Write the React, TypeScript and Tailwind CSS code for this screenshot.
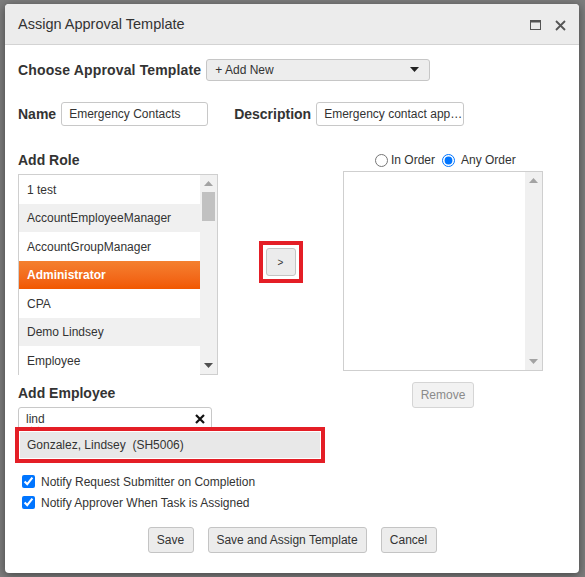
import { Fragment } from 'react';

const roles = [
  { name: '1 test', tone: 'white' },
  { name: 'AccountEmployeeManager', tone: 'gray' },
  { name: 'AccountGroupManager', tone: 'white' },
  { name: 'Administrator', tone: 'active' },
  { name: 'CPA', tone: 'white' },
  { name: 'Demo Lindsey', tone: 'gray' },
  { name: 'Employee', tone: 'white' },
];

function ScrollArrow({ down, color }: { down?: boolean; color: string }) {
  return (
    <svg width="9" height="6" viewBox="0 0 9 6">
      {down ? <path d="M0 0 H9 L4.5 5 Z" fill={color} /> : <path d="M0 5 H9 L4.5 0 Z" fill={color} />}
    </svg>
  );
}

export default function App() {
  return (
    <div className="w-[585px] h-[577px] overflow-hidden bg-[#7d7d7d] pt-[4px] pl-[5px] font-['Liberation_Sans',Arial,sans-serif] text-[#333]">
      <div className="w-[574px] h-[569px] rounded-[4px] bg-white shadow-[0_2px_10px_rgba(0,0,0,0.45)] overflow-hidden">
        {/* header */}
        <div className="flex h-[41px] items-center justify-between border-b border-[#d3d3d3] bg-[#ececec] pl-[13px] pr-[13px] pt-[2px]">
          <span className="text-[14.5px] text-[#333]">Assign Approval Template</span>
          <div className="flex items-center gap-[14px]">
            <svg width="11" height="10" viewBox="0 0 11 10">
              <rect x="0.5" y="0.5" width="10" height="9" fill="none" stroke="#555" />
              <rect x="0" y="0" width="11" height="2.5" fill="#555" />
            </svg>
            <svg width="11" height="11" viewBox="0 0 11 11">
              <path d="M1 1 L10 10 M10 1 L1 10" stroke="#555" strokeWidth="1.8" />
            </svg>
          </div>
        </div>

        {/* body */}
        <div className="px-[13px]">
          <div className="mt-[14px] flex items-center">
            <span className="text-[14px] font-bold tracking-[0.15px]">Choose Approval Template</span>
            <div className="ml-[5px] flex h-[22px] w-[224px] items-center justify-between rounded-[3px] border border-[#c6c6c6] bg-[#ededed] pl-[8px] pr-[10px] text-[12px]">
              <span>+ Add New</span>
              <ScrollArrow down color="#222" />
            </div>
          </div>

          <div className="mt-[21px] flex items-center">
            <span className="text-[14px] font-bold">Name</span>
            <div className="ml-[5px] flex h-[24px] w-[147px] items-center rounded-[3px] border border-[#c8c8c8] pl-[7px] text-[12px]">
              Emergency Contacts
            </div>
            <span className="ml-[26px] text-[14px] font-bold">Description</span>
            <div className="ml-[5px] flex h-[24px] w-[148px] items-center rounded-[3px] border border-[#c8c8c8] pl-[7px] text-[12px]">
              Emergency contact app…
            </div>
          </div>

          <div className="mt-[24px] flex">
            {/* left column */}
            <div className="w-[200px]">
              <div className="mt-[2px] h-[17px] text-[14px] font-bold leading-[17px]">Add Role</div>
              <div className="mt-[5px] flex h-[201px] border border-[#cfcfcf]">
                <div className="flex-1">
                  {roles.map((r) => (
                    <div
                      key={r.name}
                      className={
                        r.tone === 'active'
                          ? 'flex h-[28.5px] items-center bg-gradient-to-b from-[#f4802f] to-[#f15800] pl-[8px] pt-px text-[12px] font-bold text-white'
                          : r.tone === 'gray'
                          ? 'flex h-[28.5px] items-center bg-[#f0f0f0] pl-[8px] pt-px text-[12px]'
                          : 'flex h-[28.5px] items-center bg-white pl-[8px] pt-px text-[12px]'
                      }
                    >
                      {r.name}
                    </div>
                  ))}
                </div>
                <div className="flex w-[17px] flex-col items-center bg-[#f1f1f1]">
                  <div className="flex h-[17px] items-center">
                    <ScrollArrow color="#a3a3a3" />
                  </div>
                  <div className="h-[29px] w-[13px] bg-[#c1c1c1]" />
                  <div className="flex-1" />
                  <div className="flex h-[17px] items-center">
                    <ScrollArrow down color="#505050" />
                  </div>
                </div>
              </div>

              <div className="mt-[10px] h-[17px] text-[14px] font-bold leading-[17px]">Add Employee</div>
              <div className="mt-[5px] flex h-[24px] w-[194px] items-center justify-between rounded-[3px] border border-[#c8c8c8] pl-[7px] pr-[6px] text-[12px]">
                <span className="underline decoration-wavy decoration-[#e33] decoration-1 underline-offset-[3px]">lind</span>
                <svg width="10" height="10" viewBox="0 0 10 10">
                  <path d="M1 1 L9 9 M9 1 L1 9" stroke="#111" strokeWidth="2.2" />
                </svg>
              </div>
              <div className="relative z-10 -ml-[3px] -mt-[4px] w-[310px] border-[4px] border-[#e41e26] bg-white p-px">
                <div className="flex h-[26px] items-center whitespace-pre bg-[#e8e8e8] pl-[7px] text-[12px]">
                  Gonzalez, Lindsey  (SH5006)
                </div>
              </div>
            </div>

            {/* middle column */}
            <div className="flex w-[125px] justify-center">
              <div className="mt-[91px] h-[42px] w-[44px] border-[4px] border-[#e41e26] p-[3px]">
                <div className="flex h-full w-full items-center justify-center rounded-[3px] border border-[#c4c4c4] bg-[#ececec] text-[10px]">
                  &gt;
                </div>
              </div>
            </div>

            {/* right column */}
            <div className="w-[200px]">
              <div className="flex h-[18px] items-center pl-[32px] pt-[2px] text-[12px]">
                <label className="flex items-center">
                  <input type="radio" name="order" readOnly className="m-0 h-[13px] w-[13px]" />
                  <span className="ml-[3px]">In Order</span>
                </label>
                <label className="ml-[7px] flex items-center">
                  <input type="radio" name="order" defaultChecked className="m-0 h-[13px] w-[13px] accent-[#0075ff]" />
                  <span className="ml-[6px]">Any Order</span>
                </label>
              </div>
              <div className="mt-[3px] flex h-[200px] border border-[#cfcfcf]">
                <div className="flex-1 bg-white" />
                <div className="flex w-[17px] flex-col items-center justify-between bg-[#f0f0f0]">
                  <div className="flex h-[17px] items-center">
                    <ScrollArrow color="#a3a3a3" />
                  </div>
                  <div className="flex h-[17px] items-center">
                    <ScrollArrow down color="#a3a3a3" />
                  </div>
                </div>
              </div>
              <div className="mt-[11px] flex justify-center">
                <div className="flex h-[26px] w-[62px] items-center justify-center rounded-[3px] border border-[#d5d5d5] bg-[#f2f2f2] text-[12px] text-[#8a8a8a]">
                  Remove
                </div>
              </div>
            </div>
          </div>

          <div className="mt-[8px] text-[12px]">
            {['Notify Request Submitter on Completion', 'Notify Approver When Task is Assigned'].map((t) => (
              <Fragment key={t}>
                <label className="flex h-[21px] items-center pl-[4px]">
                  <input type="checkbox" defaultChecked className="m-0 h-[13px] w-[13px] accent-[#0075ff]" />
                  <span className="ml-[6px]">{t}</span>
                </label>
              </Fragment>
            ))}
          </div>

          <div className="mt-[14px] flex justify-center gap-[14px] text-[12px]">
            <div className="flex h-[26px] w-[46px] items-center justify-center rounded-[3px] border border-[#c4c4c4] bg-[#ececec]">Save</div>
            <div className="flex h-[26px] w-[159px] items-center justify-center rounded-[3px] border border-[#c4c4c4] bg-[#ececec]">Save and Assign Template</div>
            <div className="flex h-[26px] w-[56px] items-center justify-center rounded-[3px] border border-[#c4c4c4] bg-[#ececec]">Cancel</div>
          </div>
        </div>
      </div>
    </div>
  );
}
